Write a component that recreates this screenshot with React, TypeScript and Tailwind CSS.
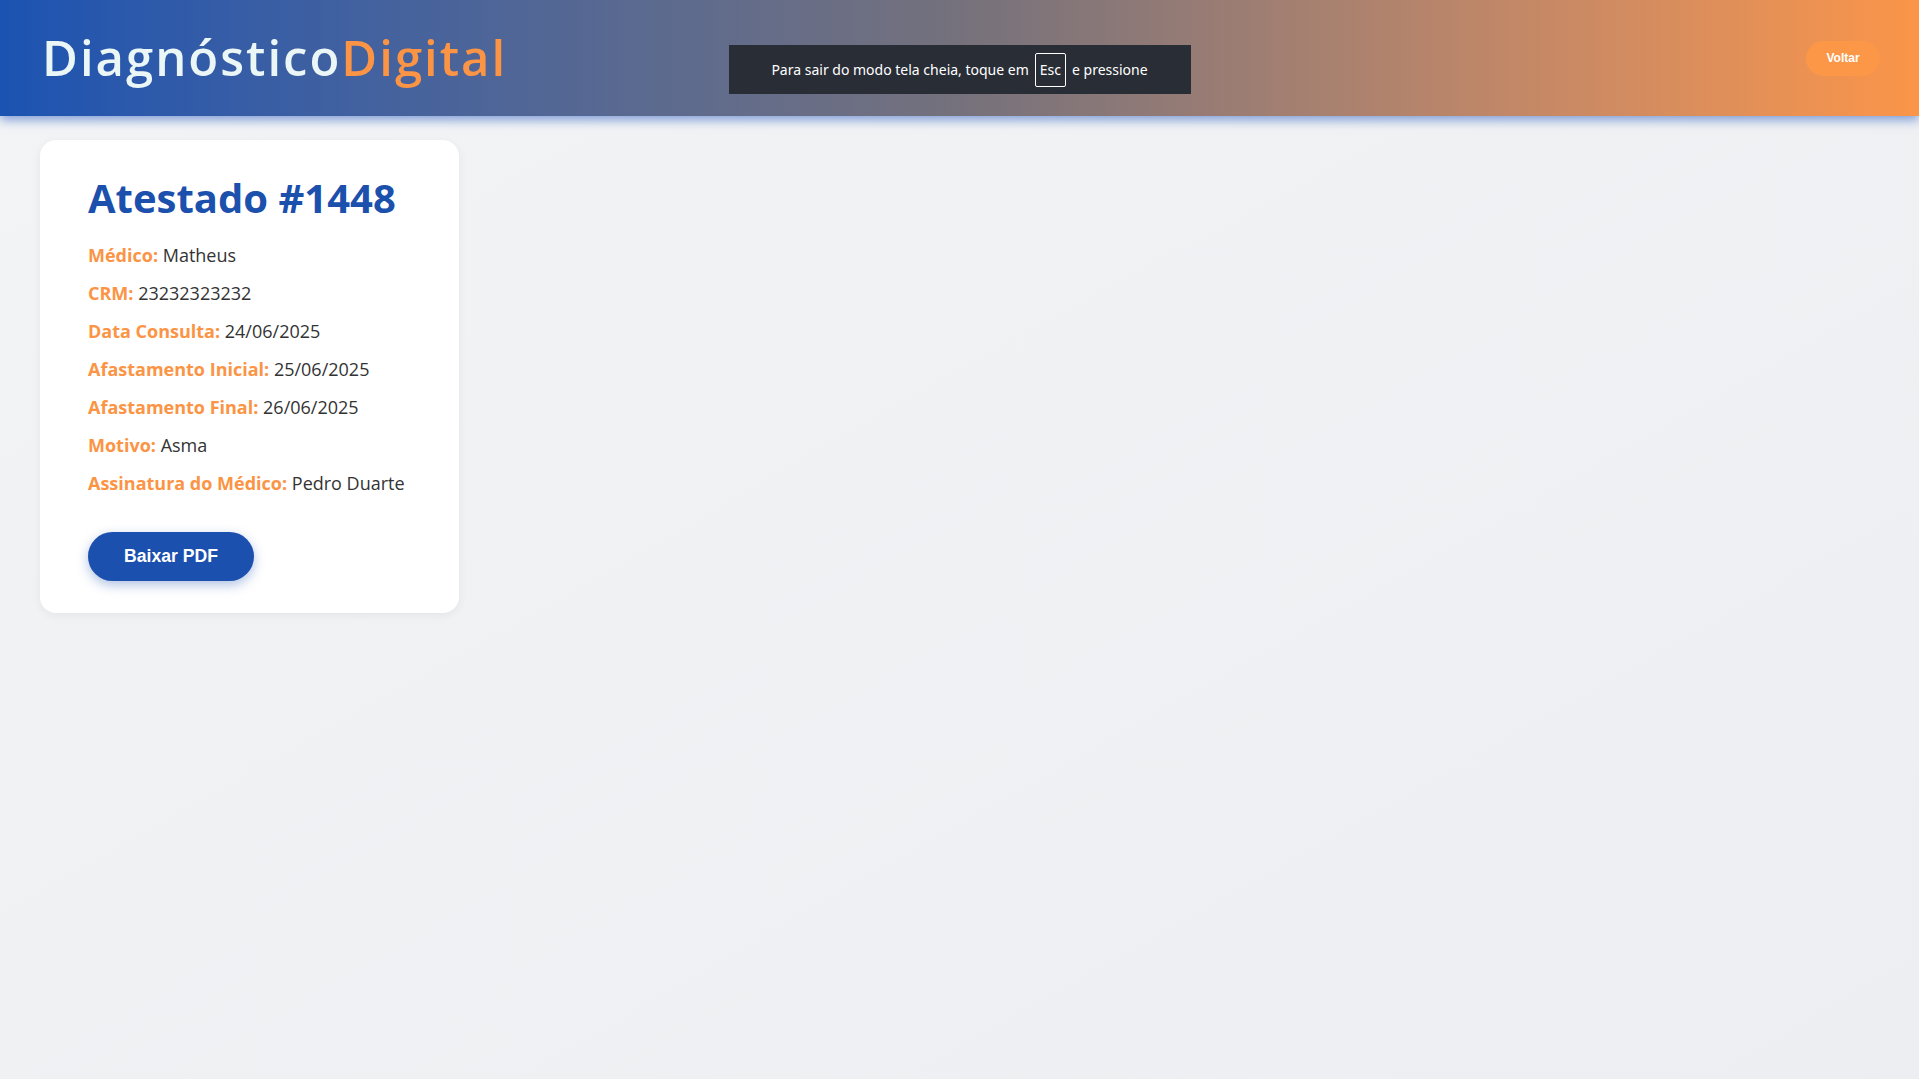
const FIELDS: [string, string][] = [
  ["Médico:", "Matheus"],
  ["CRM:", "23232323232"],
  ["Data Consulta:", "24/06/2025"],
  ["Afastamento Inicial:", "25/06/2025"],
  ["Afastamento Final:", "26/06/2025"],
  ["Motivo:", "Asma"],
  ["Assinatura do Médico:", "Pedro Duarte"],
];

const geo = "font-['Open_Sans',sans-serif]";

export default function App() {
  return (
    <div className="relative min-h-screen bg-gradient-to-br from-[#f3f4f6] to-[#eceef1]">
      <header className="relative z-10 flex h-[116px] items-center justify-between bg-gradient-to-r from-[#1b53b2] via-[#75717c] to-[#fb9548] pl-[42px] pr-[39px] shadow-[0_4px_10px_rgba(37,88,190,0.55)]">
        <h1 className={`${geo} text-[49px] font-semibold tracking-[2px]`}>
          <span className="text-[#ebf6f6]">Diagnóstico</span>
          <span className="text-[#fb9444]">Digital</span>
        </h1>
        <button
          type="button"
          className="h-[35px] w-[74px] rounded-full bg-[#fc9748] font-['Liberation_Sans',sans-serif] text-[12px] font-bold text-white"
        >
          Voltar
        </button>
      </header>

      {/* browser fullscreen notice */}
      <div className="absolute left-1/2 top-[45px] z-20 flex h-[49px] w-[462px] -translate-x-1/2 items-center justify-center gap-[6px] bg-[#292d36] font-['Noto_Sans',sans-serif] text-[14px] text-white">
        <span>Para sair do modo tela cheia, toque em</span>
        <span className="flex h-[34px] items-center rounded-[2px] border border-white px-[4px]">Esc</span>
        <span>e pressione</span>
      </div>

      <main className="pl-[40px] pt-[24px]">
        <section className="w-[419px] rounded-[16px] bg-white px-[48px] pb-[32px] pt-[34px] shadow-[0_2px_10px_rgba(0,0,0,0.06)]">
          <h2 className={`${geo} whitespace-nowrap text-[40px] font-bold leading-[48px] text-[#1b50ad]`}>
            Atestado #1448
          </h2>
          <div className={`${geo} mt-[14px] flex flex-col text-[18px]`}>
            {FIELDS.map(([label, value]) => (
              <p key={label} className="h-[38px] leading-[38px] whitespace-nowrap">
                <span className="font-bold text-[#fb9444]">{label}</span>{" "}
                <span className="font-medium text-[#333333]">{value}</span>
              </p>
            ))}
          </div>
          <button
            type="button"
            className="mt-[30px] h-[49px] w-[166px] rounded-full bg-[#1c50ae] font-['Liberation_Sans',sans-serif] text-[17.6px] font-bold text-white shadow-[0_4px_12px_rgba(28,80,174,0.35)]"
          >
            Baixar PDF
          </button>
        </section>
      </main>
    </div>
  );
}
